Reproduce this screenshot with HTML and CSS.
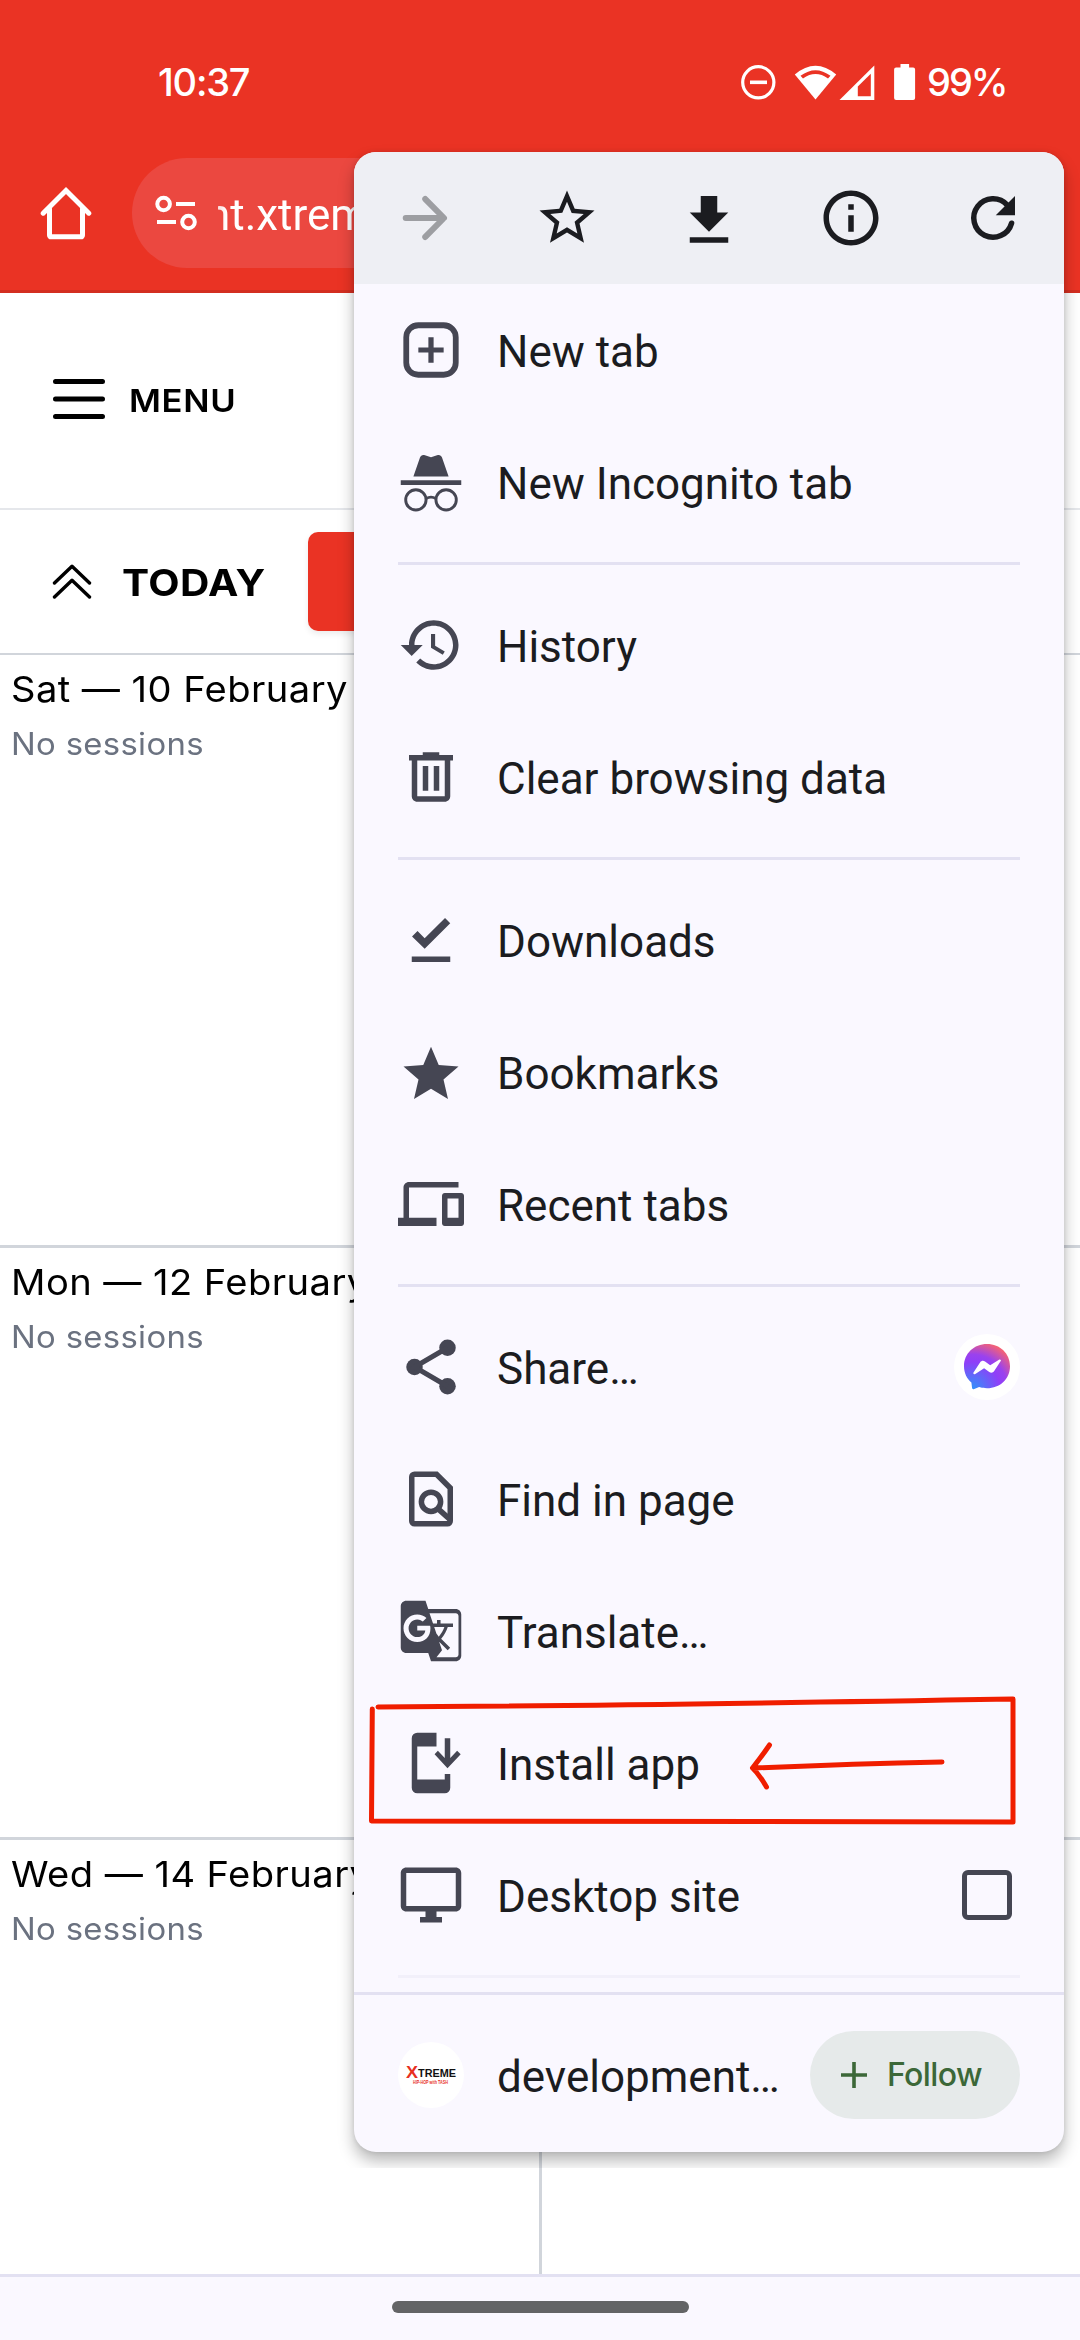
FILE: index.html
```html
<!DOCTYPE html>
<html lang="en">
<head>
<meta charset="utf-8">
<title>Schedule</title>
<link rel="stylesheet" href="styles.css">
</head>
<body>
<div class="screen">
  <header class="browser">
    <div class="status">
      <span class="clock">10:37</span>
      <svg class="status-icons" width="122" height="40" viewBox="740 62 122 40" fill="none">
        <circle cx="758.3" cy="82.3" r="15.6" stroke="#fff" stroke-width="3.2"/>
        <path d="M750 82.3h17" stroke="#fff" stroke-width="3.6"/>
        <path d="M815.5 99.6L794.8 74.5Q815.5 57 836.2 74.5z" fill="#fff"/>
        <path d="M800.5 75.8Q815.5 64.5 830.5 75.8L828 78.4Q815.5 69.5 803 78.4z" fill="#ea3324"/>
      </svg>
      <svg class="status-icons" width="62" height="40" viewBox="838 62 62 40" fill="none">
        <path d="M839.5 100L874.3 65.5V100z" fill="#fff"/>
        <path d="M857.8 86.5L870.8 73.8V96.2H857.8z" fill="#ea3324"/>
      </svg>
      <svg class="battery" width="22" height="36" viewBox="0 0 22 36"><path d="M6.500 0h8.600v3.500h4a2 2 0 0 1 2 2v28.500a2 2 0 0 1-2 2h-17a2 2 0 0 1-2-2V5.500a2 2 0 0 1 2-2h4.400z" fill="#fff"/></svg>
      <span class="percent">99%</span>
    </div>
    <div class="toolbar">
      <svg class="home" width="52" height="54" viewBox="0 0 52 54" fill="none" stroke="#fff" stroke-width="5" stroke-linecap="round" stroke-linejoin="round"><path d="M3.200 27.200L26 4.500 48.800 27.200" stroke-linejoin="miter"/><path d="M9.500 23v26.300a1.500 1.500 0 0 0 1.500 1.500h30a1.500 1.500 0 0 0 1.500-1.500V23"/></svg>
      <div class="omnibox">
        <svg width="42" height="38" viewBox="0 0 42 38" fill="none" stroke="#fff" stroke-width="4"><circle cx="8.600" cy="10" r="6.300"/><path d="M21 10h19M2 28h19"/><circle cx="33.500" cy="28" r="6.300"/></svg>
        <div class="url"><span>nt.xtremehiphop</span></div>
      </div>
    </div>
  </header>

  <main class="page">
    <div class="site-nav">
      <svg width="54" height="44" viewBox="0 0 54 44" stroke="#000" stroke-width="5" stroke-linecap="round"><path d="M3.500 4.500h47M3.500 22h47M3.500 39.500h47"/></svg>
      <span>MENU</span>
    </div>
    <div class="day-nav">
      <svg width="40" height="36" viewBox="0 0 40 36" fill="none" stroke="#000" stroke-width="3.400" stroke-linecap="round" stroke-linejoin="round"><path d="M2.500 19L20 2.200 37.500 19M2.500 33L20 16.200 37.500 33"/></svg>
      <span>TODAY</span>
      <div class="primary"></div>
    </div>
    <div class="calendar">
      <section class="day"><h2>Sat — 10 February</h2><p>No sessions</p></section><section class="day"></section>
      <section class="day"><h2>Mon — 12 February</h2><p>No sessions</p></section><section class="day"></section>
      <section class="day"><h2>Wed — 14 February</h2><p>No sessions</p></section><section class="day"></section>
    </div>
  </main>
  <footer class="gesture"><div></div></footer>

  <div class="menu">
    <div class="actions">
      <svg viewBox="0 0 24 24" fill="none" stroke="#9d9ea2" stroke-width="2.200" stroke-linecap="round" stroke-linejoin="round"><path d="M5 12h13.800M12.100 5.100L18.900 12l-6.800 6.900"/></svg>
      <svg viewBox="0 0 24 24"><path d="M22 9.240l-7.190-.62L12 2 9.190 8.630 2 9.240l5.460 4.730L5.820 21 12 17.270 18.180 21l-1.630-7.030L22 9.240zM12 15.400l-3.760 2.270 1-4.280-3.320-2.880 4.380-.38L12 6.100l1.710 4.040 4.380.38-3.320 2.880 1 4.280L12 15.400z"/></svg>
      <svg viewBox="0 0 24 24"><path d="M19 10h-4V4H9v6H5l7 7 7-7zM5 19v2h14v-2H5z"/></svg>
      <svg viewBox="0 0 24 24"><path d="M11 7h2v2h-2zm0 4h2v6h-2zm1-9C6.480 2 2 6.480 2 12s4.480 10 10 10 10-4.480 10-10S17.520 2 12 2zm0 18c-4.410 0-8-3.590-8-8s3.590-8 8-8 8 3.590 8 8-3.590 8-8 8z"/></svg>
      <svg viewBox="0 0 24 24"><path d="M20 4v7h-7z"/><path d="M18.750 13.900A7 7 0 1 1 17.200 7.300" fill="none" stroke="#1b1c20" stroke-width="2" stroke-linecap="round"/></svg>
    </div>

    <ul class="items">
      <li><svg viewBox="0 0 24 24"><rect x="3" y="3" width="18" height="18" rx="4.400" fill="none" stroke="#454653" stroke-width="2.100"/><path d="M7.400 12h9.200M12 7.400v9.200" stroke="#454653" stroke-width="1.900"/></svg><span>New tab</span></li>
      <li><svg viewBox="0 0 24 24"><path d="M5.600 10L8 3.100c.3-.8 1-1.100 1.800-.8l2.200.7 2.200-.7c.8-.3 1.500 0 1.800.8L18.400 10zM1 11.400h22v1.700H1z"/><g fill="none" stroke="#454653" stroke-width="1.050"><circle cx="6.500" cy="18.500" r="3.700"/><circle cx="17.500" cy="18.500" r="3.700"/><path d="M10.200 18q1.800-1 3.600 0"/></g></svg><span>New Incognito tab</span></li>
      <li class="rule"></li>
      <li><svg viewBox="0 0 24 24"><path d="M13 3c-4.970 0-9 4.030-9 9H1l3.890 3.890.07.14L9 12H6c0-3.870 3.130-7 7-7s7 3.130 7 7-3.130 7-7 7c-1.930 0-3.680-.79-4.940-2.060l-1.420 1.420C8.270 19.990 10.510 21 13 21c4.970 0 9-4.030 9-9s-4.030-9-9-9zm-1 5v5l4.280 2.540.72-1.210-3.500-2.080V8H12z"/></svg><span>History</span></li>
      <li><svg viewBox="0 0 24 24"><path d="M15 4V3H9v1H4v2h1v13c0 1.100.9 2 2 2h10c1.100 0 2-.9 2-2V6h1V4h-5zm2 15H7V6h10v13zM9 8h2v9H9zm4 0h2v9h-2z"/></svg><span>Clear browsing data</span></li>
      <li class="rule"></li>
      <li><svg viewBox="0 0 24 24"><path d="M5.100 10.700L7.100 8.700 9.700 11.400 17.100 4l1.900 1.900-9.300 9.300zM5 18h14v2H5z"/></svg><span>Downloads</span></li>
      <li><svg viewBox="0 0 24 24"><path d="M12 18.070L18.180 21.800l-1.640-7.030L22 10.040l-7.190-.61L12 2.800 9.190 9.430 2 10.040l5.460 4.730L5.820 21.800z"/></svg><span>Bookmarks</span></li>
      <li><svg viewBox="0 0 24 24"><path d="M4 6h18V4H4c-1.100 0-2 .9-2 2v11H0v3h14v-3H4V6zm19 2h-6c-.55 0-1 .45-1 1v10c0 .55.45 1 1 1h6c.55 0 1-.45 1-1V9c0-.55-.45-1-1-1zm-1 9h-4v-7h4v7z"/></svg><span>Recent tabs</span></li>
      <li class="rule"></li>
      <li><svg viewBox="0 0 24 24"><circle cx="18" cy="5" r="3"/><circle cx="6" cy="12" r="3"/><circle cx="18" cy="19" r="3"/><path d="M18 5L6 12l12 7" fill="none" stroke="#454653" stroke-width="1.800"/></svg><span>Share…</span>
        <div class="share-app"><svg viewBox="0 0 46 46"><defs><radialGradient id="msg" cx=".18" cy="1" r="1.100"><stop offset="0" stop-color="#2f93fa"/><stop offset=".55" stop-color="#8f3ff8"/><stop offset=".7" stop-color="#9a42ee"/><stop offset="1" stop-color="#f9646f"/></radialGradient></defs><path d="M23 0C10 0 0 9.500 0 22.200c0 6.700 2.800 12.400 7.400 16.300L8 43.500c.1 1.700 1 2 2.300 1.500l4.800-2c2.500.8 5 1.200 7.900 1.200 13 0 23-9.300 23-22S36 0 23 0z" fill="url(#msg)"/><path d="M9.500 28.500l6.700-10.300c1.200-1.700 3.200-2 4.800-.8l5.200 3.900 8.800-5.600c1.200-.7 2.500.2 1.700 1.400l-6.500 10c-1.200 1.800-3.300 2.100-4.900.9l-5.200-3.800-8.800 5.700c-1.200.8-2.500-.3-1.800-1.400z" fill="#fff"/></svg></div></li>
      <li><svg viewBox="0 0 24 24" fill="none" stroke="#454653" stroke-width="2"><path d="M6 3h8l5 5v12a1 1 0 0 1-1 1H6a1 1 0 0 1-1-1V4a1 1 0 0 1 1-1z" fill="none"/><circle cx="12" cy="13" r="3.500" fill="none"/><path d="M14.500 15.500l4.500 4"/></svg><span>Find in page</span></li>
      <li><svg viewBox="0 0 24 24"><path d="M21 4H11l-1-3H3c-1.100 0-2 .9-2 2v15c0 1.100.9 2 2 2h8l1 3h9c1.100 0 2-.9 2-2V6c0-1.100-.9-2-2-2zM7 16c-2.760 0-5-2.240-5-5s2.240-5 5-5c1.350 0 2.480.5 3.350 1.300L9.030 8.570c-.38-.36-1.040-.78-2.030-.78-1.740 0-3.150 1.440-3.150 3.210S5.260 14.210 7 14.210c2.010 0 2.840-1.440 2.920-2.410H7v-1.710h4.680c.07.31.12.61.12 1.020C11.800 13.970 9.890 16 7 16zm6.170-5.420h3.700c-.43 1.250-1.110 2.430-2.050 3.470-.31-.35-.6-.72-.86-1.100l-.79-2.370zm8.830 9.920c0 .55-.45 1-1 1h-7l2-2.500-1.040-3.100 3.100 3.100.92-.92-3.300-3.250.02-.02c1.130-1.250 1.930-2.690 2.400-4.220H20v-1.300h-4.530V8h-1.290v1.290h-1.440L11.460 5.500h9.540c.55 0 1 .45 1 1v14z"/></svg><span>Translate…</span></li>
      <li><svg viewBox="0 0 24 24"><path d="M14 1H7a2 2 0 0 0-2 2v18a2 2 0 0 0 2 2h10a2 2 0 0 0 2-2v-5h-2v2H7V6h7z"/><path d="M17 3h2v7.200l2.500-2.700 1.300 1.300-4.800 5.100-4.700-5.100 1.200-1.300 2.500 2.700z"/></svg><span>Install app</span></li>
      <li><svg viewBox="0 0 24 24"><path d="M21 2H3c-1.100 0-2 .9-2 2v12c0 1.100.9 2 2 2h7v2H8v2h8v-2h-2v-2h7c1.100 0 2-.9 2-2V4c0-1.100-.9-2-2-2zm0 14H3V4h18v12z"/></svg><span>Desktop site</span><div class="checkbox"></div></li>
      <li class="rule faint"></li>
    </ul>

    <div class="site-row">
      <svg class="favicon" viewBox="0 0 66 66"><circle cx="33" cy="33" r="33" fill="#fff"/><text x="8" y="36" font-size="16" fill="#e8301f" textLength="12" lengthAdjust="spacingAndGlyphs">X</text><text x="20" y="35" font-size="11" fill="#111" textLength="38" lengthAdjust="spacingAndGlyphs">TREME</text><text x="15" y="41.500" font-size="5.500" fill="#e8301f" textLength="35" lengthAdjust="spacingAndGlyphs">HIP-HOP with TASH</text></svg>
      <span class="host">development…</span>
      <div class="follow"><svg width="26" height="26" viewBox="0 0 26 26" stroke="#3c6838" stroke-width="3.600"><path d="M0 13h26M13 0v26"/></svg><span>Follow</span></div>
    </div>
  </div>

  <svg class="markup" width="660" height="140" viewBox="362 1690 660 140" fill="none" stroke="#f01e00" stroke-width="5" stroke-linecap="round" stroke-linejoin="round"><path d="M378 1707Q600 1706 1013 1699V1822Q700 1822 371.500 1821L372.300 1709"/><path d="M942 1762Q850 1764 753 1768M769.500 1745Q762 1756 752.500 1768Q759 1774 766.500 1787"/></svg>
</div>
</body>
</html>
```
FILE: styles.css
```css
* { box-sizing: border-box; margin: 0; padding: 0; }
body { background: #fff; }
.screen {
  position: relative;
  display: flex;
  flex-direction: column;
  width: 1080px;
  height: 2340px;
  overflow: hidden;
  font-family: Inter, "Liberation Sans", sans-serif;
}

/* Browser chrome */
.browser { height: 293px; background: #ea3324; border-bottom: 3px solid #d32e20; color: #fff; }
.status { display: flex; align-items: center; height: 158px; padding: 6px 0 0 158px; font: 500 38px/40px Inter, sans-serif; }
.status > * { flex: none; }
.clock { width: 582px; letter-spacing: -1.2px; }
.status-icons { margin-right: -24px; }
.status-icons + .status-icons { margin: 0 -6px 0 0; }
.percent { padding-left: 11px; letter-spacing: -2px; }
.toolbar { display: flex; align-items: flex-start; padding-left: 40px; }
.home { margin: 28px 40px 0 0; }
.omnibox { display: flex; align-items: center; flex: 1; height: 110px; margin-right: 30px; padding-left: 23px; border-radius: 55px; background: #eb4840; }
.url { margin-left: 21px; overflow: hidden; font: 400 44px/60px Roboto, sans-serif; mask-image: linear-gradient(90deg, rgba(0,0,0,.8), #000 8px); }
.url span { display: block; margin: 4px 0 0 -12px; }

/* Web page */
.page { display: flex; flex-direction: column; flex: 1; min-height: 0; color: #000; }
.site-nav { display: flex; align-items: center; height: 217px; padding: 0 0 3px 52px; border-bottom: 2px solid #e5e7eb; font-weight: 600; font-size: 31.500px; }
.site-nav span { margin: 3px 0 0 23px; letter-spacing: .6px; transform: scaleX(1.1); transform-origin: left; }
.day-nav { display: flex; align-items: center; height: 145px; padding-left: 52px; border-bottom: 2px solid #d1d5db; font-weight: 700; font-size: 37px; }
.day-nav span { width: 186px; margin: 1px 0 0 30px; letter-spacing: .3px; transform: scaleX(1.1); transform-origin: left; }
.primary { flex: 1; height: 99px; margin-right: 30px; border-radius: 10px; background: #ea3324; box-shadow: 0 3px 6px rgba(0,0,0,.08); }
.calendar { display: grid; grid-template-columns: 542px 1fr; grid-template-rows: 593px 592px 1fr; flex: 1; min-height: 0; overflow: hidden; }
.day { padding: 12px 0 0 11px; border-bottom: 3px solid #d1d5db; }
.day:nth-child(odd) { border-right: 3px solid #d1d5db; }
.day:nth-child(n+5) { border-bottom: 0; }
.day h2, .day p { transform: scaleX(1.06); transform-origin: left; }
.day h2 { width: 400px; font-weight: 400; font-size: 36px; line-height: 44px; letter-spacing: .4px; white-space: nowrap; }
.day p { width: 300px; margin-top: 11px; font-size: 31px; line-height: 44px; letter-spacing: .3px; color: #6b7280; }
.gesture { display: flex; justify-content: center; height: 66px; padding-top: 24px; border-top: 3px solid #e3e1f2; background: #faf8ff; }
.gesture div { width: 297px; height: 12px; border-radius: 6px; background: #636466; }

/* Overflow menu */
.menu {
  position: absolute;
  left: 354px;
  top: 152px;
  width: 710px;
  height: 2000px;
  border-radius: 22px;
  background: #faf8ff;
  box-shadow: 0 9px 16px rgba(0,0,0,.28), 0 0 5px rgba(0,0,0,.1);
  clip-path: inset(-40px -16px -16px -40px);
  color: #1b1c20;
  font: 400 44px/60px Roboto, sans-serif;
}
.actions { display: grid; grid-template-columns: repeat(5, 1fr); place-items: center; height: 132px; border-radius: 22px 22px 0 0; background: #eeeff4; fill: #1b1c20; }
.actions svg, .items li > svg { width: 66px; height: 66px; flex: none; }
.items { list-style: none; padding: 0 44px; }
.items li { display: flex; align-items: center; height: 132px; fill: #454653; }
.items li > span { flex: 1; padding: 3px 0 0 33px; }
.items .rule { height: 3px; margin: 14px 0; background: #e3e1f2; }
.items .faint { background: #f2f0fa; }
.share-app { display: grid; place-items: center; width: 66px; height: 66px; border-radius: 50%; background: #fff; }
.share-app svg { width: 46px; height: 46px; }
.checkbox { width: 50px; height: 50px; margin-right: 8px; border: 5.500px solid #454653; border-radius: 6px; }
.site-row { display: flex; align-items: center; height: 160px; padding: 3px 44px 0; border-top: 3px solid #e3e1f2; }
.favicon { width: 66px; height: 66px; flex: none; font-family: "Liberation Sans", sans-serif; font-weight: 700; }
.host { flex: 1; padding: 3px 0 0 33px; }
.follow { display: flex; align-items: center; width: 210px; height: 88px; padding-left: 31px; border-radius: 44px; background: #e6eaea; color: #3c6838; font: 500 32px/40px Inter, sans-serif; }
.follow span { margin-left: 20px; letter-spacing: -.6px; }

/* Hand-drawn callout over the menu */
.markup { position: absolute; left: 362px; top: 1690px; }
```
